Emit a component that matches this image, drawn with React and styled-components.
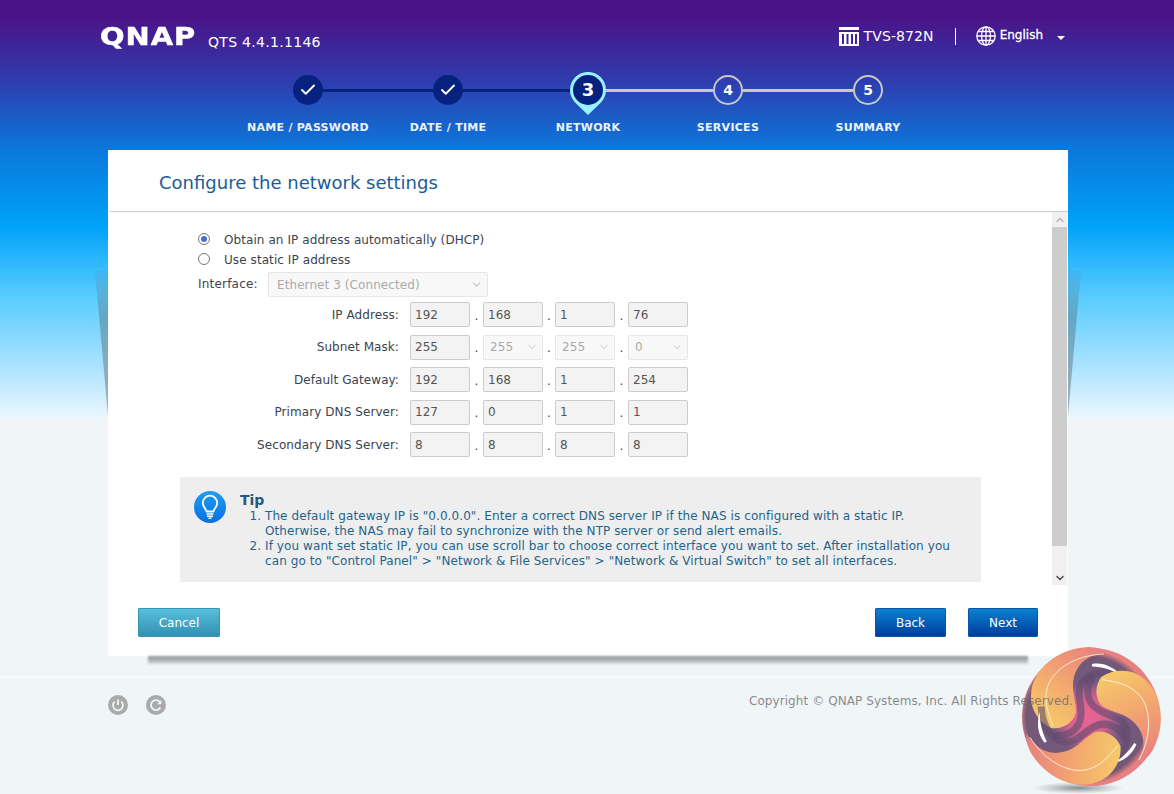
import React from 'react'
import styled, { createGlobalStyle } from 'styled-components'
import { ChevronDown, ChevronUp, Check } from 'lucide-react'

const GlobalStyle = createGlobalStyle`
    html, body {
        margin: 0;
        padding: 0;
    }
    body {
        font-family: "DejaVu Sans", Verdana, sans-serif;
        font-size: 12px;
    }
`

const Page = styled.div`
    position: relative;
    width: 1174px;
    height: 794px;
    overflow: hidden;
    background: linear-gradient(
        180deg,
        #4a1488 0,
        #4a1488 18px,
        #2f3cae 80px,
        #0b78dc 150px,
        #00a2f9 225px,
        #5ccdff 300px,
        #b0e4ff 370px,
        #e6f5fe 414px,
        #f0f5f8 420px
    );
`

const Header = styled.header`
    display: flex;
    align-items: center;
    justify-content: space-between;
    height: 72px;
    box-sizing: border-box;
    padding: 0 109px 0 100px;
`

const Brand = styled.div`
    display: flex;
    align-items: flex-end;
    color: #fff;
`

const Logo = styled.div`
    width: 96px;
    height: 20px;
    margin-right: 12px;
    margin-top: 1px;
    font-size: 24.5px;
    line-height: 20px;
    font-weight: 700;
    letter-spacing: 0.8px;
    white-space: nowrap;
    -webkit-text-stroke: 0.5px #fff;
    transform: scaleX(1.18);
    transform-origin: left center;
`

const Version = styled.div`
    font-size: 14px;
    line-height: 16px;
    margin-bottom: -3px;
    letter-spacing: 0.3px;
`

const Device = styled.div`
    display: flex;
    align-items: center;
    color: #fff;
    font-size: 14px;
`

const DeviceName = styled.span`
    margin-left: 5px;
    letter-spacing: 0.1px;
`

const Divider = styled.span`
    width: 1px;
    height: 17px;
    margin: 0 20px 0 21px;
    background: #fff;
`

const Language = styled.span`
    margin-left: 4px;
    margin-top: -3px;
    font-size: 12px;
    -webkit-text-stroke: 0.3px #fff;
`

const Caret = styled.span`
    margin-left: 14px;
    margin-top: 3px;
    border-left: 4px solid transparent;
    border-right: 4px solid transparent;
    border-top: 4px solid #fff;
`

const Track = styled.div`
    display: flex;
    align-items: center;
    justify-content: center;
    height: 36px;
    padding-left: 2px;
`

const Dot = styled.div`
    display: flex;
    align-items: center;
    justify-content: center;
    box-sizing: border-box;
    width: 30px;
    height: 30px;
    border-radius: 50%;
    color: #fff;
    font-size: 14px;
    font-weight: 700;
    background: ${(p) => (p.$todo ? 'transparent' : '#06227e')};
    border: ${(p) => (p.$todo ? '2px solid #c8c8c8' : 'none')};
`

const Pin = styled.div`
    position: relative;
    width: 36px;
    height: 36px;
    color: #fff;
    font-size: 18px;
    line-height: 36px;
    font-weight: 700;
    text-align: center;
`

const PinShape = styled.svg`
    position: absolute;
    left: 0;
    top: 0;
`

const PinNumber = styled.span`
    position: relative;
`

const Line = styled.div`
    height: 3px;
    width: ${(p) => p.$width}px;
    background: ${(p) => (p.$done ? '#06227e' : '#c8c8c8')};
`

const Labels = styled.div`
    display: flex;
    justify-content: center;
    margin-top: 13px;
    padding-left: 2px;
`

const StepLabel = styled.div`
    width: 140px;
    height: 29px;
    text-align: center;
    color: #eaf4ff;
    font-size: 11px;
    line-height: 14px;
    font-weight: 700;
    letter-spacing: 0.28px;
    white-space: nowrap;
`

const Panel = styled.main`
    position: relative;
    width: 960px;
    height: 506px;
    margin-left: 108px;
    background: #fff;
`

const Title = styled.h1`
    height: 62px;
    margin: 0 0 0 1px;
    padding-left: 50px;
    box-sizing: border-box;
    border-bottom: 1px solid #ccc;
    color: #1a5c98;
    font-size: 18px;
    line-height: 66px;
    font-weight: 400;
    white-space: nowrap;
`

const Scroller = styled.div`
    display: flex;
    height: 373px;
`

const ScrollBody = styled.div`
    flex: 1;
    padding-top: 17px;
    color: #3a4450;
`

const ScrollBar = styled.div`
    display: flex;
    flex-direction: column;
    width: 15px;
    margin-right: 1px;
    background: #f0f0f0;
`

const ScrollButton = styled.div`
    display: flex;
    align-items: center;
    justify-content: center;
    height: 15px;
    color: ${(p) => p.$color};
`

const ScrollThumb = styled.div`
    height: 319px;
    background: #cdcdcd;
`

const ScrollRest = styled.div`
    flex: 1;
`

const Form = styled.div`
    margin-left: 90px;
    letter-spacing: 0.08px;
`

const RadioRow = styled.label`
    display: flex;
    align-items: center;
    height: 20px;
`

const RadioText = styled.span`
    margin-top: 1px;
`

const Radio = styled.span`
    display: flex;
    align-items: center;
    justify-content: center;
    box-sizing: border-box;
    width: 12px;
    height: 12px;
    margin-right: 14px;
    border: 1px solid #767676;
    border-radius: 50%;
    &::after {
        content: '';
        display: ${(p) => (p.$checked ? 'block' : 'none')};
        width: 6px;
        height: 6px;
        border-radius: 50%;
        background: #3b6fd0;
    }
`

const InterfaceRow = styled.div`
    display: flex;
    align-items: center;
    margin-top: 3px;
    margin-bottom: 5px;
`

const InterfaceLabel = styled.span`
    width: 70px;
    margin-top: -2px;
    letter-spacing: 0.2px;
`

const Select = styled.div`
    display: flex;
    align-items: center;
    justify-content: space-between;
    box-sizing: border-box;
    width: ${(p) => p.$width}px;
    height: 25px;
    padding: 0 4px 0 ${(p) => (p.$wide ? 8 : 6)}px;
    background: #f8f8f8;
    border: 1px solid #e6e6e6;
    border-radius: 2px;
    color: #aaa;
    white-space: nowrap;
`

const AddressGrid = styled.div`
    display: grid;
    grid-template-columns: 201px auto;
    column-gap: 11px;
    row-gap: 7.5px;
    align-items: center;
`

const FieldLabel = styled.div`
    text-align: right;
    white-space: nowrap;
`

const Octets = styled.div`
    display: flex;
    align-items: center;
`

const Octet = styled.input`
    box-sizing: border-box;
    width: 60px;
    height: 25px;
    padding: 0 4px;
    background: #f3f3f3;
    border: 1px solid #ccc;
    border-radius: 2px;
    color: #555;
    font-family: inherit;
    font-size: 12px;
`

const Separator = styled.span`
    width: ${(p) => (p.$narrow ? 12 : 13)}px;
    text-align: center;
    color: #444;
    margin-top: 2px;
`

const Tip = styled.section`
    display: flex;
    box-sizing: border-box;
    width: 801px;
    height: 105px;
    margin: 20px 0 0 72px;
    padding: 14px 0 0 14px;
    background: #eee;
    color: #1f648c;
`

const TipIcon = styled.div`
    flex: none;
    width: 32px;
    height: 32px;
    margin-right: 14px;
`

const TipBody = styled.div`
    width: 720px;
`

const TipTitle = styled.div`
    color: #1b5c80;
    font-size: 14px;
    line-height: 16px;
    font-weight: 700;
    margin-top: 1px;
`

const TipList = styled.ol`
    margin: 1px 0 0;
    padding-left: 25px;
    line-height: 15px;
    font-size: 12px;
    letter-spacing: 0.09px;
`

const ActionBar = styled.div`
    display: flex;
    align-items: flex-start;
    padding: 23px 30px 0;
`

const Button = styled.button`
    box-sizing: border-box;
    width: ${(p) => p.$width}px;
    height: 29px;
    margin-left: ${(p) => p.$gap || 0}px;
    padding: 0;
    border: 1px solid ${(p) => (p.$cancel ? '#3a95b5' : '#0a57a8')};
    border-radius: 1px;
    color: #fff;
    font-family: inherit;
    font-size: 12px;
    background: ${(p) =>
        p.$cancel
            ? 'linear-gradient(180deg, #58bfde, #3290b2)'
            : 'linear-gradient(180deg, #0a82ce, #003c9e)'};
`

const Spacer = styled.div`
    flex: 1;
`

const PanelShadow = styled.div`
    width: 880px;
    height: 8px;
    margin-left: 148px;
    background: linear-gradient(180deg, #979a9a, #abaeae 50%, #dde1e3);
    filter: blur(1.2px);
`

const FooterRule = styled.div`
    height: 2px;
    margin-top: 12px;
    background: #f7fafb;
`

const Footer = styled.footer`
    position: relative;
    display: flex;
    align-items: flex-start;
    justify-content: space-between;
    padding: 17px 101px 0 108px;
`

const SystemButtons = styled.div`
    display: flex;
    gap: 18px;
`

const Copyright = styled.div`
    position: relative;
    z-index: 2;
    margin-top: -1px;
    color: rgba(105, 105, 105, 0.78);
    letter-spacing: 0.08px;
    white-space: nowrap;
`

const Watermark = styled.svg`
    position: absolute;
    left: 1020px;
    top: 647px;
    z-index: 1;
`

const SideShade = styled.div`
    position: absolute;
    top: 271px;
    left: ${(p) => (p.$right ? 1068 : 95)}px;
    width: 13px;
    height: 145px;
    background: linear-gradient(
        180deg,
        rgba(90, 130, 150, 0.12),
        rgba(90, 130, 150, 0.55) 30%,
        rgba(120, 130, 140, 0.6)
    );
    clip-path: ${(p) =>
        p.$right ? 'polygon(0 0, 100% 0, 0 100%)' : 'polygon(0 0, 100% 0, 100% 100%)'};
`

const PanelLayer = styled.div`
    position: relative;
`

const BuildingIcon = () => (
    <svg width="20" height="19" viewBox="0 0 20 19" fill="#fff">
        <rect x="0" y="0" width="20" height="3" />
        <path d="M0 5h20v14H0z M3 7v10h2V7z M7.5 7v10h2V7z M12 7v10h2V7z M16 7v10h2V7z" fillRule="evenodd" />
    </svg>
)

const GlobeIcon = () => (
    <svg width="20" height="20" viewBox="0 0 20 20" fill="none" stroke="#fff" strokeWidth="1.3">
        <circle cx="10" cy="10" r="9.2" />
        <ellipse cx="10" cy="10" rx="4.4" ry="9.2" />
        <path d="M10 1v18M1 10h18M2.4 5.5h15.2M2.4 14.5h15.2" />
    </svg>
)

const BulbIcon = () => (
    <svg width="32" height="32" viewBox="0 0 32 32" fill="none">
        <defs>
            <linearGradient id="bulb" x1="0" y1="0" x2="0" y2="1">
                <stop offset="0" stopColor="#1f9df0" />
                <stop offset="1" stopColor="#0a6fe0" />
            </linearGradient>
        </defs>
        <circle cx="16" cy="16" r="16" fill="url(#bulb)" />
        <path
            d="M12.5 20.5c0-2.5-3.7-4.2-3.7-8.6a7.2 7.2 0 0 1 14.4 0c0 4.4-3.7 6.1-3.7 8.6z"
            stroke="#fff"
            strokeWidth="1.8"
            strokeLinejoin="round"
        />
        <path d="M12.5 23h7M13 25.2h6M14.5 27.2h3" stroke="#fff" strokeWidth="1.4" />
    </svg>
)

const PowerIcon = () => (
    <svg width="20" height="20" viewBox="0 0 20 20" fill="none">
        <circle cx="10" cy="10" r="10" fill="#aaa" />
        <path d="M6.6 6.6a5 5 0 1 0 6.8 0" stroke="#f0f5f8" strokeWidth="1.8" />
        <path d="M10 4.5v5.5" stroke="#f0f5f8" strokeWidth="1.8" />
    </svg>
)

const RefreshIcon = () => (
    <svg width="20" height="20" viewBox="0 0 20 20" fill="none">
        <circle cx="10" cy="10" r="10" fill="#aaa" />
        <path d="M14.4 12.5a5 5 0 1 1-.3-5.3" stroke="#f0f5f8" strokeWidth="1.8" />
        <path d="M15.4 5v4.2h-4.2z" fill="#f0f5f8" />
    </svg>
)

// the round swirl in the bottom right corner, one lobe repeated three times
const Swirl = () => (
    <Watermark width="142" height="147" viewBox="0 0 142 147">
        <defs>
            <radialGradient id="core" cx="0.47" cy="0.5" r="0.5">
                <stop offset="0" stopColor="#ee6496" />
                <stop offset="0.3" stopColor="#cf628e" />
                <stop offset="0.52" stopColor="#75597f" />
                <stop offset="0.88" stopColor="#735876" />
                <stop offset="0.97" stopColor="#e88080" />
            </radialGradient>
            <linearGradient id="lobe" gradientUnits="userSpaceOnUse" x1="80" y1="0" x2="25" y2="80">
                <stop offset="0" stopColor="#e77f7f" />
                <stop offset="0.55" stopColor="#f3a96f" />
                <stop offset="1" stopColor="#f6cb69" />
            </linearGradient>
            <radialGradient id="ground" cx="0.5" cy="0.5" r="0.5">
                <stop offset="0" stopColor="#6c7272" stopOpacity="0.8" />
                <stop offset="1" stopColor="#8c9292" stopOpacity="0" />
            </radialGradient>
        </defs>
        <ellipse cx="58" cy="141" rx="46" ry="6" fill="url(#ground)" />
        <circle cx="71" cy="70" r="69" fill="url(#core)" />
        {[0, 120, 240].map((angle) => (
            <g key={angle} transform={`rotate(${angle} 71 70)`}>
                <path
                    d="M105 32C85 22 66 24 60 40C57 52 64 62 60 74C56 85 46 90 34 88"
                    stroke="#5f4b6e"
                    strokeWidth="7"
                    strokeOpacity="0.6"
                    fill="none"
                />
                <path d="M72 17C83 15 93 20 101 28C92 23 83 20 72 19.5Z" fill="#fff" />
                <path
                    d="M31 81C18 75 10 60 11 48C12 22 38 1 69 0C76 0 83 2 89 6C70 6 54 16 53 38C53 47 56 55 56 65C55 74 43 83 31 81Z"
                    fill="url(#lobe)"
                />
                <path
                    d="M33 79C28 66 24 55 27 42C31 24 54 8 84 7"
                    stroke="#fff6e6"
                    strokeWidth="0.8"
                    fill="none"
                />
            </g>
        ))}
    </Watermark>
)

const addressRows = [
    { label: 'IP Address:', octets: ['192', '168', '1', '76'] },
    { label: 'Subnet Mask:', octets: ['255', '255', '255', '0'], selects: true },
    { label: 'Default Gateway:', octets: ['192', '168', '1', '254'] },
    { label: 'Primary DNS Server:', octets: ['127', '0', '1', '1'] },
    { label: 'Secondary DNS Server:', octets: ['8', '8', '8', '8'] },
]

const stepLabels = ['NAME / PASSWORD', 'DATE / TIME', 'NETWORK', 'SERVICES', 'SUMMARY']

const OctetField = ({ value, asSelect }) =>
    asSelect ? (
        <Select $width={60}>
            {value}
            <ChevronDown size={12} color="#c4c4c4" />
        </Select>
    ) : (
        <Octet value={value} readOnly />
    )

const App = () => (
    <Page>
        <GlobalStyle />
        <SideShade />
        <SideShade $right />
        <Swirl />
        <PanelLayer>
            <Header>
                <Brand>
                    <Logo>QNAP</Logo>
                    <Version>QTS 4.4.1.1146</Version>
                </Brand>
                <Device>
                    <BuildingIcon />
                    <DeviceName>TVS-872N</DeviceName>
                    <Divider />
                    <GlobeIcon />
                    <Language>English</Language>
                    <Caret />
                </Device>
            </Header>
            <Track>
                <Dot><Check size={18} strokeWidth={2.5} /></Dot>
                <Line $width={110} $done />
                <Dot><Check size={18} strokeWidth={2.5} /></Dot>
                <Line $width={107} $done />
                <Pin>
                    <PinShape width="36" height="44" viewBox="0 0 36 44">
                        <path d="M18 43L5.3 30.7A18 18 0 1 1 30.7 30.7Z" fill="#98f2ff" />
                        <circle cx="18" cy="18" r="15" fill="#06227e" />
                    </PinShape>
                    <PinNumber>3</PinNumber>
                </Pin>
                <Line $width={107} />
                <Dot $todo>4</Dot>
                <Line $width={110} />
                <Dot $todo>5</Dot>
            </Track>
            <Labels>
                {stepLabels.map((label) => (
                    <StepLabel key={label}>{label}</StepLabel>
                ))}
            </Labels>
            <Panel>
                <Title>Configure the network settings</Title>
                <Scroller>
                    <ScrollBody>
                        <Form>
                            <RadioRow>
                                <Radio $checked />
                                <RadioText>Obtain an IP address automatically (DHCP)</RadioText>
                            </RadioRow>
                            <RadioRow>
                                <Radio />
                                <RadioText>Use static IP address</RadioText>
                            </RadioRow>
                            <InterfaceRow>
                                <InterfaceLabel>Interface:</InterfaceLabel>
                                <Select $width={220} $wide>
                                    Ethernet 3 (Connected)
                                    <ChevronDown size={13} color="#c4c4c4" />
                                </Select>
                            </InterfaceRow>
                            <AddressGrid>
                                {addressRows.map((row) => (
                                    <React.Fragment key={row.label}>
                                        <FieldLabel>{row.label}</FieldLabel>
                                        <Octets>
                                            {row.octets.map((octet, i) => (
                                                <React.Fragment key={i}>
                                                    {i > 0 && <Separator $narrow={i === 2}>.</Separator>}
                                                    <OctetField value={octet} asSelect={row.selects && i > 0} />
                                                </React.Fragment>
                                            ))}
                                        </Octets>
                                    </React.Fragment>
                                ))}
                            </AddressGrid>
                        </Form>
                        <Tip>
                            <TipIcon><BulbIcon /></TipIcon>
                            <TipBody>
                                <TipTitle>Tip</TipTitle>
                                <TipList>
                                    <li>
                                        The default gateway IP is "0.0.0.0". Enter a correct DNS server IP if the NAS is configured with a static IP. Otherwise, the NAS may fail to synchronize with the NTP server or send alert emails.
                                    </li>
                                    <li>
                                        If you want set static IP, you can use scroll bar to choose correct interface you want to set. After installation you can go to "Control Panel" &gt; "Network &amp; File Services" &gt; "Network &amp; Virtual Switch" to set all interfaces.
                                    </li>
                                </TipList>
                            </TipBody>
                        </Tip>
                    </ScrollBody>
                    <ScrollBar>
                        <ScrollButton $color="#b4b4b4"><ChevronUp size={12} strokeWidth={3} /></ScrollButton>
                        <ScrollThumb />
                        <ScrollRest />
                        <ScrollButton $color="#505050"><ChevronDown size={12} strokeWidth={3} /></ScrollButton>
                    </ScrollBar>
                </Scroller>
                <ActionBar>
                    <Button $cancel $width={82}>Cancel</Button>
                    <Spacer />
                    <Button $width={71}>Back</Button>
                    <Button $width={70} $gap={22}>Next</Button>
                </ActionBar>
            </Panel>
            <PanelShadow />
            <FooterRule />
            <Footer>
                <SystemButtons>
                    <PowerIcon />
                    <RefreshIcon />
                </SystemButtons>
                <Copyright>Copyright © QNAP Systems, Inc. All Rights Reserved.</Copyright>
            </Footer>
        </PanelLayer>
    </Page>
)

export default App
